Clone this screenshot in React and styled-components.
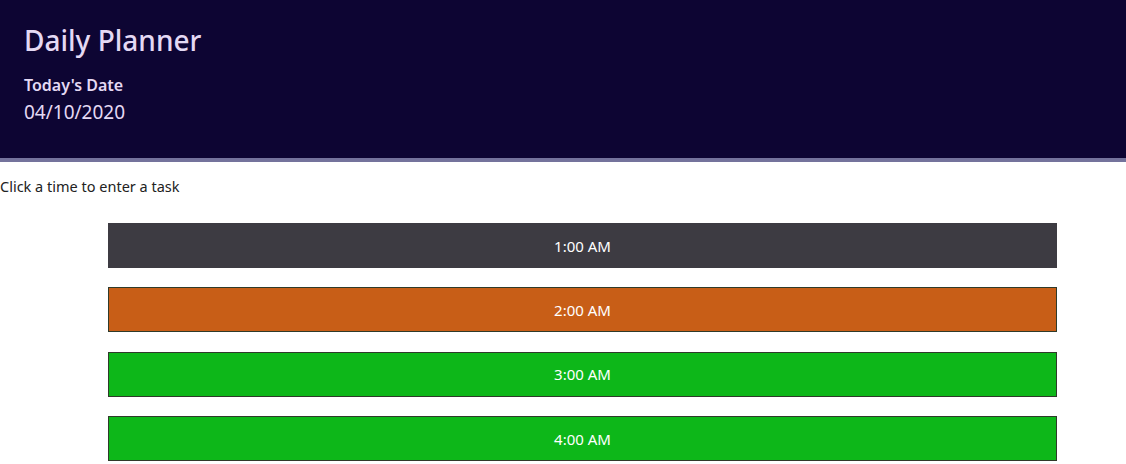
import React from "react";
import styled, { createGlobalStyle } from "styled-components";

const GlobalStyle = createGlobalStyle`
  body {
    margin: 0;
    font-family: "Noto Sans", "Open Sans", sans-serif;
    background: #fff;
    color: #222;
  }
`;

const Header = styled.header`
  background: #0d0533;
  border-bottom: 4px solid #74739c;
  height: 158px;
  box-sizing: content-box;
  padding: 0 24px;
  color: #e4d9f4;
  display: flex;
  flex-direction: column;
`;

const Title = styled.h1`
  margin: 22px 0 0;
  font-size: 28px;
  font-weight: 500;
  line-height: 36px;
`;

const DateLabel = styled.div`
  margin-top: 16px;
  font-size: 16px;
  font-weight: 600;
  line-height: 22px;
`;

const DateValue = styled.div`
  margin-top: 4px;
  font-size: 19px;
  line-height: 24px;
`;

const Hint = styled.p`
  margin: 14px 0 0;
  font-size: 14.5px;
  line-height: 20px;
  color: #222;
`;

const Schedule = styled.div`
  display: flex;
  flex-direction: column;
  gap: 19.4px;
  margin: 27px 0 0 108px;
  width: 949px;
`;

const colors = {
  past: "#3d3b42",
  present: "#c85e17",
  future: "#0db719",
};

const Slot = styled.button`
  height: 45px;
  width: 100%;
  background: ${(p) => colors[p.status]};
  border: 1px solid ${(p) => (p.status === "past" ? colors.past : "#2f3a2a")};
  color: #fff;
  font-family: inherit;
  font-size: 15px;
  cursor: pointer;
  padding: 0;
`;

const slots = [
  { time: "1:00 AM", status: "past" },
  { time: "2:00 AM", status: "present" },
  { time: "3:00 AM", status: "future" },
  { time: "4:00 AM", status: "future" },
];

function App() {
  return (
    <>
      <GlobalStyle />
      <Header>
        <Title>Daily Planner</Title>
        <DateLabel>Today's Date</DateLabel>
        <DateValue>04/10/2020</DateValue>
      </Header>
      <Hint>Click a time to enter a task</Hint>
      <Schedule>
        {slots.map((s) => (
          <Slot key={s.time} status={s.status}>
            {s.time}
          </Slot>
        ))}
      </Schedule>
    </>
  );
}

export default App;
